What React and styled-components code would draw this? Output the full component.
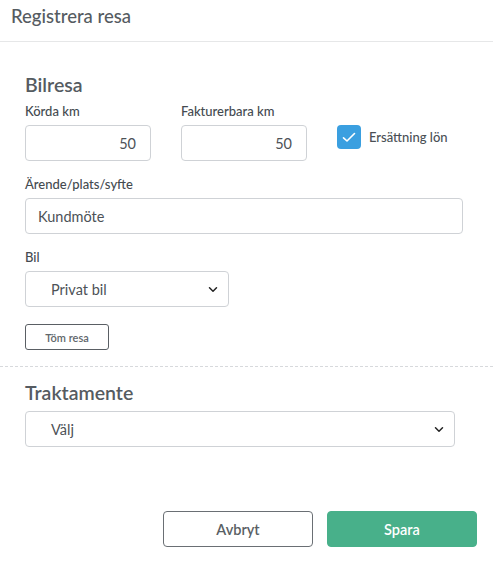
import React from "react";
import styled, { createGlobalStyle } from "styled-components";

const GlobalStyle = createGlobalStyle`
  body {
    margin: 0;
    background: #fff;
    font-family: Lato, "Open Sans", sans-serif;
    color: #4a4f55;
  }
`;

const Chevron = () => (
  <svg width="10" height="7" viewBox="0 0 10 7" fill="none">
    <path d="M1.5 1.8 L5 5.2 L8.5 1.8" stroke="#222" strokeWidth="1.5" strokeLinecap="round" strokeLinejoin="round" />
  </svg>
);

const App = () => {
  return (
    <>
      <GlobalStyle />
      <Modal>
        <Header>Registrera resa</Header>
        <Section>
          <SectionTitle top="31px">Bilresa</SectionTitle>
          <Row>
            <Field>
              <Label>Körda km</Label>
              <Input width="126px" align="right">50</Input>
            </Field>
            <Field>
              <Label>Fakturerbara km</Label>
              <Input width="126px" align="right">50</Input>
            </Field>
            <CheckRow>
              <CheckBox>
                <svg width="14" height="11" viewBox="0 0 14 11" fill="none">
                  <path d="M1.5 5.8 L5 9 L12.5 1.5" stroke="#fff" strokeWidth="1.6" strokeLinecap="round" strokeLinejoin="round" />
                </svg>
              </CheckBox>
              <CheckLabel>Ersättning lön</CheckLabel>
            </CheckRow>
          </Row>
          <Field>
            <Label>Ärende/plats/syfte</Label>
            <Input width="438px">Kundmöte</Input>
          </Field>
          <Field>
            <Label>Bil</Label>
            <Select width="204px">
              <span>Privat bil</span>
              <Chevron />
            </Select>
          </Field>
          <SmallButton>Töm resa</SmallButton>
        </Section>
        <Divider />
        <Section>
          <SectionTitle top="14px">Traktamente</SectionTitle>
          <Select width="430px">
            <span>Välj</span>
            <Chevron />
          </Select>
        </Section>
        <Footer>
          <Button>Avbryt</Button>
          <Button primary>Spara</Button>
        </Footer>
      </Modal>
    </>
  );
};

const Modal = styled.div`
  width: 493px;
  height: 562px;
  display: flex;
  flex-direction: column;
`;

const Header = styled.div`
  height: 42px;
  box-sizing: border-box;
  padding: 5px 11px 0;
  font-size: 18.5px;
  font-weight: 500;
  color: #555b61;
  border-bottom: 1px solid #e6e7e8;
`;

const Section = styled.div`
  display: flex;
  flex-direction: column;
  align-items: flex-start;
  padding: 0 25px;
`;

const SectionTitle = styled.h2`
  margin: ${(p) => p.top} 0 6px;
  font-size: 19.5px;
  font-weight: 600;
  color: #555b61;
  line-height: 24px;
`;

const Row = styled.div`
  display: flex;
  gap: 30px;
  align-items: flex-start;
`;

const Field = styled.div`
  display: flex;
  flex-direction: column;
  margin-bottom: 15px;
`;

const Label = styled.div`
  font-size: 13px;
  font-weight: 500;
  color: #444a50;
  line-height: 16px;
  margin-bottom: 6px;
`;

const Input = styled.div`
  width: ${(p) => p.width};
  height: 36px;
  box-sizing: border-box;
  border: 1px solid #cfd2d6;
  border-radius: 4px;
  display: flex;
  align-items: center;
  justify-content: ${(p) => (p.align === "right" ? "flex-end" : "flex-start")};
  padding: 0 14px 0 12px;
  font-size: 14.5px;
  color: #4d5257;
`;

const Select = styled.div`
  width: ${(p) => p.width};
  height: 36px;
  box-sizing: border-box;
  border: 1px solid #cfd2d6;
  border-radius: 4px;
  display: flex;
  align-items: center;
  justify-content: space-between;
  padding: 0 10px 0 25px;
  font-size: 14.5px;
  color: #4d5257;
`;

const CheckRow = styled.div`
  display: flex;
  align-items: center;
  gap: 8px;
  margin-top: 22px;
`;

const CheckBox = styled.div`
  width: 24px;
  height: 24px;
  border-radius: 4px;
  background: #3a9fe0;
  display: flex;
  align-items: center;
  justify-content: center;
`;

const CheckLabel = styled.span`
  font-size: 13px;
  font-weight: 500;
  color: #4a4f55;
`;

const SmallButton = styled.button`
  width: 84px;
  height: 26px;
  margin-top: 2px;
  border: 1px solid #5a5f64;
  border-radius: 3px;
  background: #fff;
  font-family: inherit;
  font-size: 11px;
  font-weight: 600;
  color: #62676c;
  padding: 0;
`;

const Divider = styled.div`
  margin-top: 16px;
  border-top: 1px dashed #d7d9dc;
`;

const Footer = styled.div`
  margin-top: auto;
  display: flex;
  justify-content: flex-end;
  gap: 14px;
  padding: 0 16px 15px 0;
`;

const Button = styled.button`
  width: 150px;
  height: 36px;
  border-radius: 4px;
  border: 1px solid ${(p) => (p.primary ? "#48b08a" : "#6a6f74")};
  background: ${(p) => (p.primary ? "#48b08a" : "#fff")};
  color: ${(p) => (p.primary ? "#fff" : "#5a5f64")};
  font-family: inherit;
  font-size: 14.5px;
  font-weight: 600;
`;

export default App;
